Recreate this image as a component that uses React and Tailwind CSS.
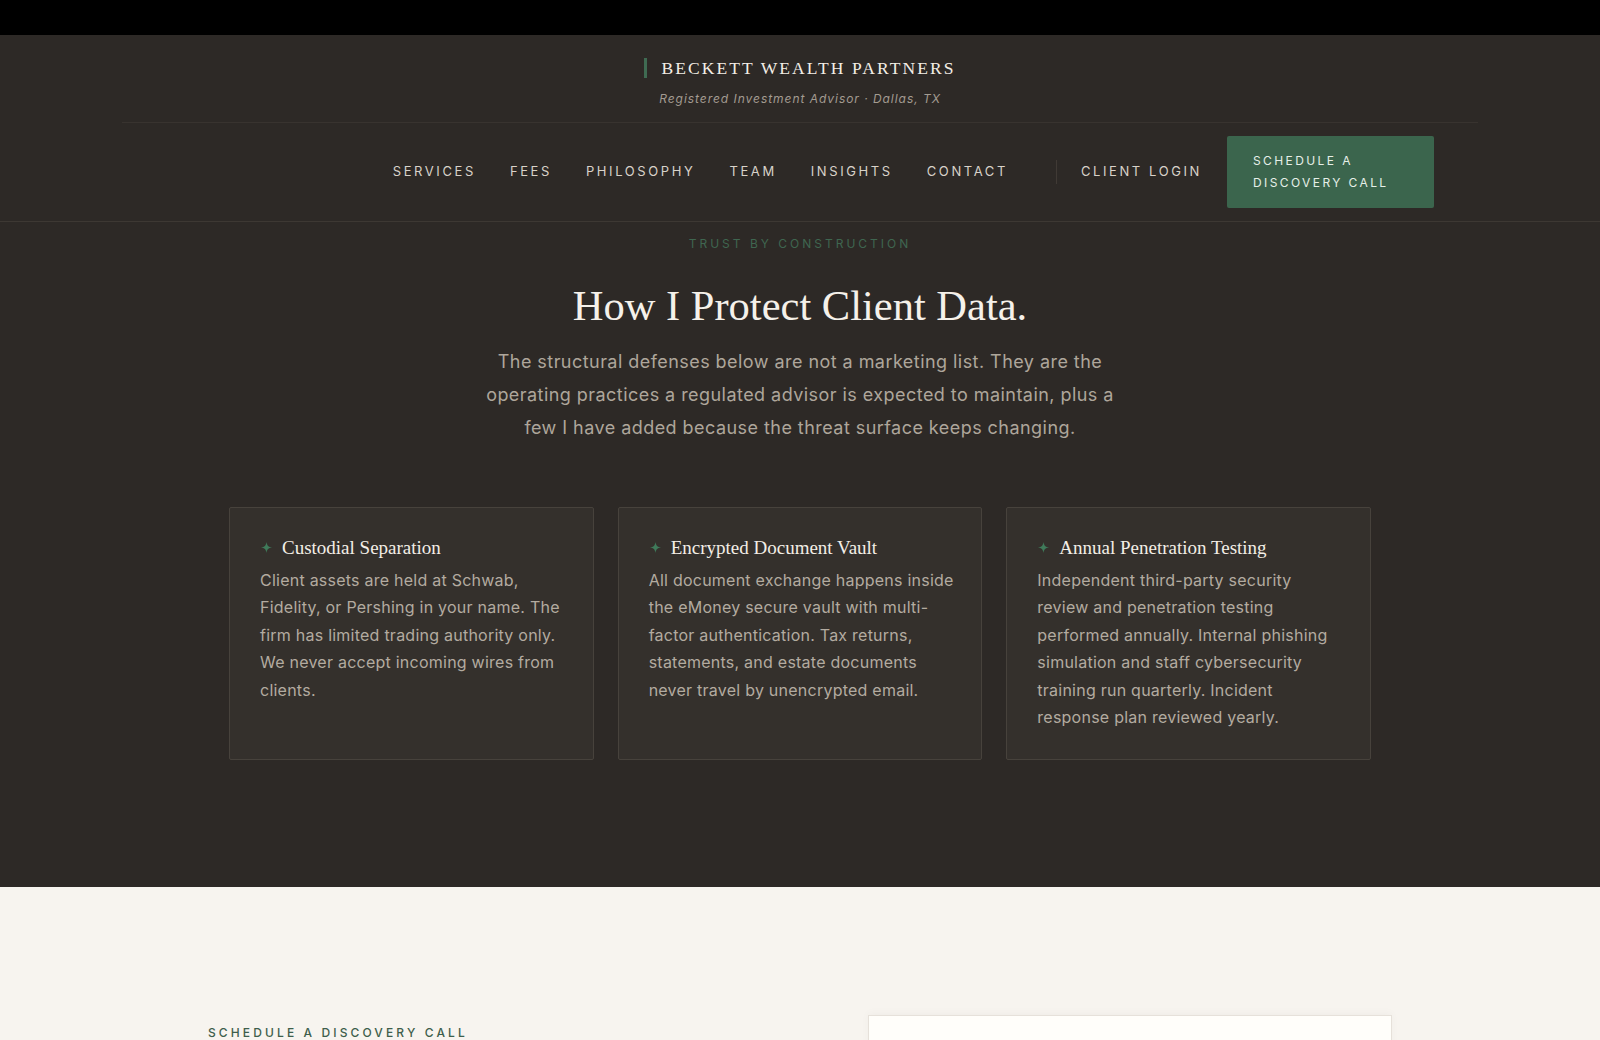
import React from "react";

const serif = { fontFamily: '"Liberation Serif", "DejaVu Serif", serif' };

const navItems = ["Services", "Fees", "Philosophy", "Team", "Insights", "Contact"];

const defenses = [
  {
    title: "Custodial Separation",
    body: "Client assets are held at Schwab, Fidelity, or Pershing in your name. The firm has limited trading authority only. We never accept incoming wires from clients.",
  },
  {
    title: "Encrypted Document Vault",
    body: "All document exchange happens inside the eMoney secure vault with multi-factor authentication. Tax returns, statements, and estate documents never travel by unencrypted email.",
  },
  {
    title: "Annual Penetration Testing",
    body: "Independent third-party security review and penetration testing performed annually. Internal phishing simulation and staff cybersecurity training run quarterly. Incident response plan reviewed yearly.",
  },
];

function Sparkle() {
  return (
    <svg width="11" height="11" viewBox="0 0 12 12" className="shrink-0">
      <path d="M6 0 C6.6 4 8 5.4 12 6 C8 6.6 6.6 8 6 12 C5.4 8 4 6.6 0 6 C4 5.4 5.4 4 6 0 Z" fill="#3f7a5a" />
    </svg>
  );
}

function Header() {
  return (
    <header className="bg-[#2d2926] border-b border-[#3d3833]">
      {/* brand */}
      <div className="mx-auto w-[1356px] pt-[21px] pb-[15px] border-b border-[#38332f] flex flex-col items-center">
        <div className="flex items-center gap-[14px]">
          <span className="w-[3px] h-[20px] bg-[#3f6b52]" />
          <span style={serif} className="text-[17.5px] leading-[24px] tracking-[0.12em] text-[#f3eee6]">
            BECKETT WEALTH PARTNERS
          </span>
        </div>
        <p className="mt-[11px] text-[12px] leading-[16px] italic tracking-[0.08em] text-[#a39b91]">
          Registered Investment Advisor · Dallas, TX
        </p>
      </div>

      {/* nav */}
      <nav className="flex items-center justify-end pr-[166px] pt-[13px] pb-[13px]">
        <ul className="flex items-center gap-[34px]">
          {navItems.map((item) => (
            <li key={item} className="text-[13px] uppercase tracking-[0.2em] text-[#d8d2c9]">
              {item}
            </li>
          ))}
        </ul>
        <span className="ml-[48px] w-px h-[24px] bg-[#403a35]" />
        <span className="ml-[24px] text-[13px] uppercase tracking-[0.2em] text-[#d8d2c9]">Client Login</span>
        <button className="ml-[25px] w-[207px] h-[72px] bg-[#3b654d] rounded-[2px] text-left pl-[26px] text-[12px] leading-[22.5px] uppercase tracking-[0.2em] text-[#e6efe8]">
          Schedule a
          <br />
          Discovery Call
        </button>
      </nav>
    </header>
  );
}

function Defenses() {
  return (
    <section className="bg-[#2d2926] pt-[14px] pb-[127px]">
      <div className="flex flex-col items-center text-center">
        <p className="text-[12px] leading-[16px] uppercase tracking-[0.25em] text-[#3f6650]">Trust by Construction</p>
        <h1 style={serif} className="mt-[27px] text-[42.5px] leading-[53px] text-[#f5f1ea]">
          How I Protect Client Data.
        </h1>
        <p className="mt-[13px] w-[640px] text-[18px] leading-[33.2px] tracking-[0.025em] text-[#aea69b]">
          The structural defenses below are not a marketing list. They are the operating practices a regulated
          advisor is expected to maintain, plus a few I have added because the threat surface keeps changing.
        </p>
      </div>

      <div className="mx-auto mt-[62px] w-[1142px] grid grid-cols-3 gap-[24px]">
        {defenses.map((d) => (
          <div key={d.title} className="bg-[#34302c] border border-[#47423c] rounded-[2px] pt-[28px] pl-[30px] pr-[27px] pb-[27px]">
            <div className="flex items-center gap-[10px]">
              <span className="pl-[1px]">
                <Sparkle />
              </span>
              <h3 style={serif} className="text-[19px] leading-[24px] text-[#f3eee6]">
                {d.title}
              </h3>
            </div>
            <p className="mt-[7px] text-[16px] leading-[27.5px] tracking-[0.015em] text-[#b3aba0]">{d.body}</p>
          </div>
        ))}
      </div>
    </section>
  );
}

function Schedule() {
  return (
    <section className="bg-[#f7f4ef] pt-[128px] pb-[80px]">
      <div className="mx-auto w-[1184px] grid grid-cols-[1fr_524px] items-start">
        <p className="mt-[10px] text-[12px] leading-[16px] uppercase tracking-[0.26em] font-medium text-[#3e5e4b]">
          Schedule a Discovery Call
        </p>
        <div className="h-[360px] bg-[#fffefa] border border-[#e6e1da] shadow-[0_-2px_8px_rgba(0,0,0,0.03)]" />
      </div>
    </section>
  );
}

export default function App() {
  return (
    <div className="min-h-screen bg-[#2d2926]" style={{ fontFamily: 'Inter, "Liberation Sans", sans-serif' }}>
      <div className="h-[35px] bg-black" />
      <Header />
      <Defenses />
      <Schedule />
    </div>
  );
}
